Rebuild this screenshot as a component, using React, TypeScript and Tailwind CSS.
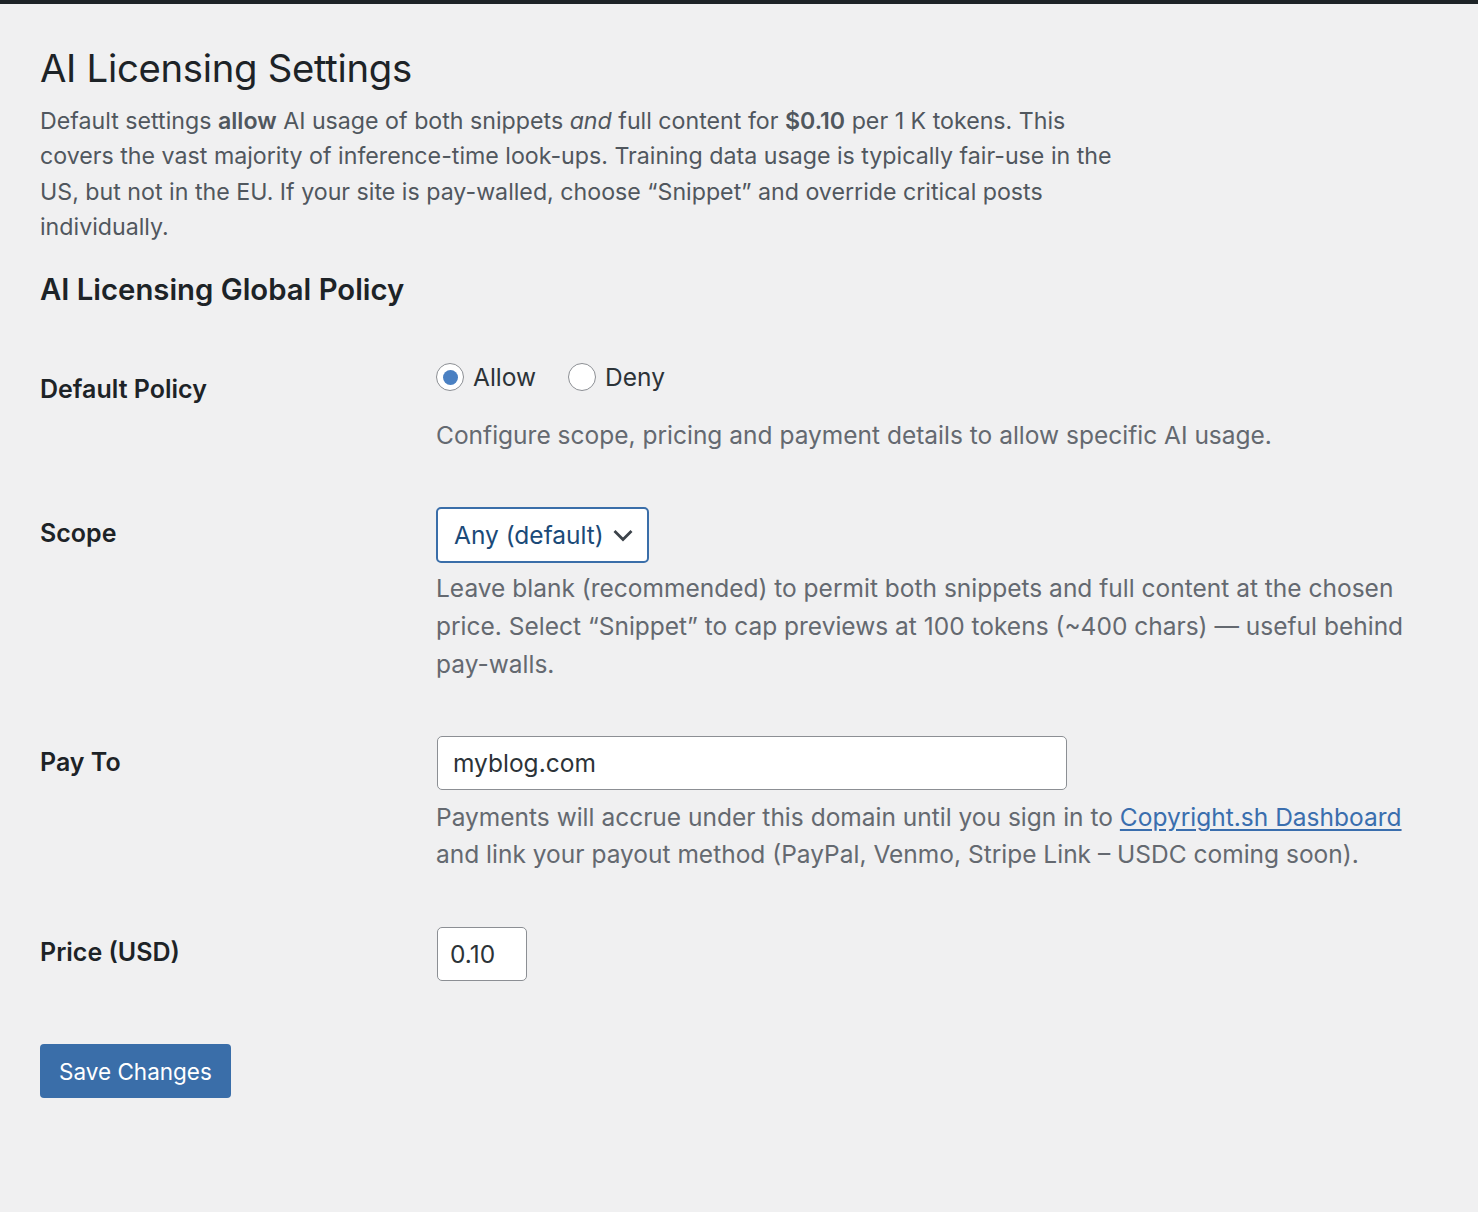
import React from "react";

function Radio({ checked, label }: { checked?: boolean; label: string }) {
  return (
    <label className="flex items-center gap-[9px] text-[24.5px] text-[#2c3338]">
      <span className="flex h-[28px] w-[28px] items-center justify-center rounded-full border border-[#8c8f94] bg-white">
        {checked && <span className="h-[15px] w-[15px] rounded-full bg-[#4a80c2]" />}
      </span>
      {label}
    </label>
  );
}

function Row({ label, children, labelPad }: { label: string; children: React.ReactNode; labelPad: string }) {
  return (
    <div className="flex items-start">
      <div className={`w-[396px] shrink-0 text-[25px] leading-[34px] font-semibold text-[#1d2327] ${labelPad}`}>{label}</div>
      <div className="flex-1">{children}</div>
    </div>
  );
}

export default function App() {
  return (
    <div className="min-h-[1212px] bg-[#f0f0f1] font-['Inter',sans-serif]">
      <div className="h-[4px] bg-[#1d2327]" />
      <div className="px-10">
        <h1 className="pt-[36px] text-[38.3px] leading-[56px] font-normal tracking-[-0.3px] text-[#1d2327]">
          AI Licensing Settings
        </h1>
        <p className="mt-[8px] w-[1100px] text-[23.2px] leading-[35.4px] text-[#50575e]">
          Default settings <b className="font-semibold">allow</b> AI usage of both snippets <i>and</i> full content for{" "}
          <b className="font-semibold">$0.10</b> per 1 K tokens. This
          <br />
          covers the vast majority of inference-time look-ups. Training data usage is typically fair-use in the
          <br />
          US, but not in the EU. If your site is pay-walled, choose “Snippet” and override critical posts
          <br />
          individually.
        </p>
        <h2 className="mt-[24px] text-[29.3px] leading-[40px] font-semibold text-[#1d2327]">AI Licensing Global Policy</h2>

        <div className="mt-[49px] flex flex-col">
          <Row label="Default Policy" labelPad="pt-[13px]">
            <div className="flex items-center gap-[32px]">
              <Radio checked label="Allow" />
              <Radio label="Deny" />
            </div>
            <p className="mt-[22px] text-[24.5px] leading-[36px] text-[#646970]">
              Configure scope, pricing and payment details to allow specific AI usage.
            </p>
          </Row>

          <div className="mt-[54px]">
            <Row label="Scope" labelPad="pt-[9px]">
              <div className="flex h-[56px] w-[213px] items-center justify-between rounded-[5px] border-2 border-[#3a6ea9] bg-white pl-[16px] pr-[13px] text-[24.5px] text-[#1b4a78]">
                <span>Any (default)</span>
                <svg width="22" height="22" viewBox="0 0 22 22" fill="none">
                  <path d="M2.5 7l8.5 8.5 8.5-8.5" stroke="#3c434a" strokeWidth="2.8" />
                </svg>
              </div>
              <p className="mt-[6px] text-[24.5px] leading-[38px] text-[#646970]">
                Leave blank (recommended) to permit both snippets and full content at the chosen price. Select “Snippet” to
                cap previews at 100 tokens (~400 chars) — useful behind pay-walls.
              </p>
            </Row>
          </div>

          <div className="mt-[53px]">
            <Row label="Pay To" labelPad="pt-[9px]">
              <div className="ml-px flex h-[54px] w-[630px] items-center rounded-[5px] border border-[#8c8f94] bg-white px-[15px] text-[24.5px] text-[#2c3338]">
                myblog.com
              </div>
              <p className="mt-[9px] text-[24.5px] leading-[37px] text-[#646970]">
                Payments will accrue under this domain until you sign in to{" "}
                <a className="text-[#3a6eae] underline underline-offset-[3px]">Copyright.sh Dashboard</a> and link your payout
                method (PayPal, Venmo, Stripe Link – USDC coming soon).
              </p>
            </Row>
          </div>

          <div className="mt-[54px]">
            <Row label="Price (USD)" labelPad="pt-[8px]">
              <div className="ml-px flex h-[54px] w-[90px] items-center rounded-[5px] border border-[#8c8f94] bg-white px-[12px] text-[24.5px] text-[#2c3338]">
                0.10
              </div>
            </Row>
          </div>
        </div>

        <button className="mt-[63px] h-[54px] rounded-[4px] bg-[#3a6ea9] px-[19px] text-[22.5px] text-white">
          Save Changes
        </button>
      </div>
    </div>
  );
}
